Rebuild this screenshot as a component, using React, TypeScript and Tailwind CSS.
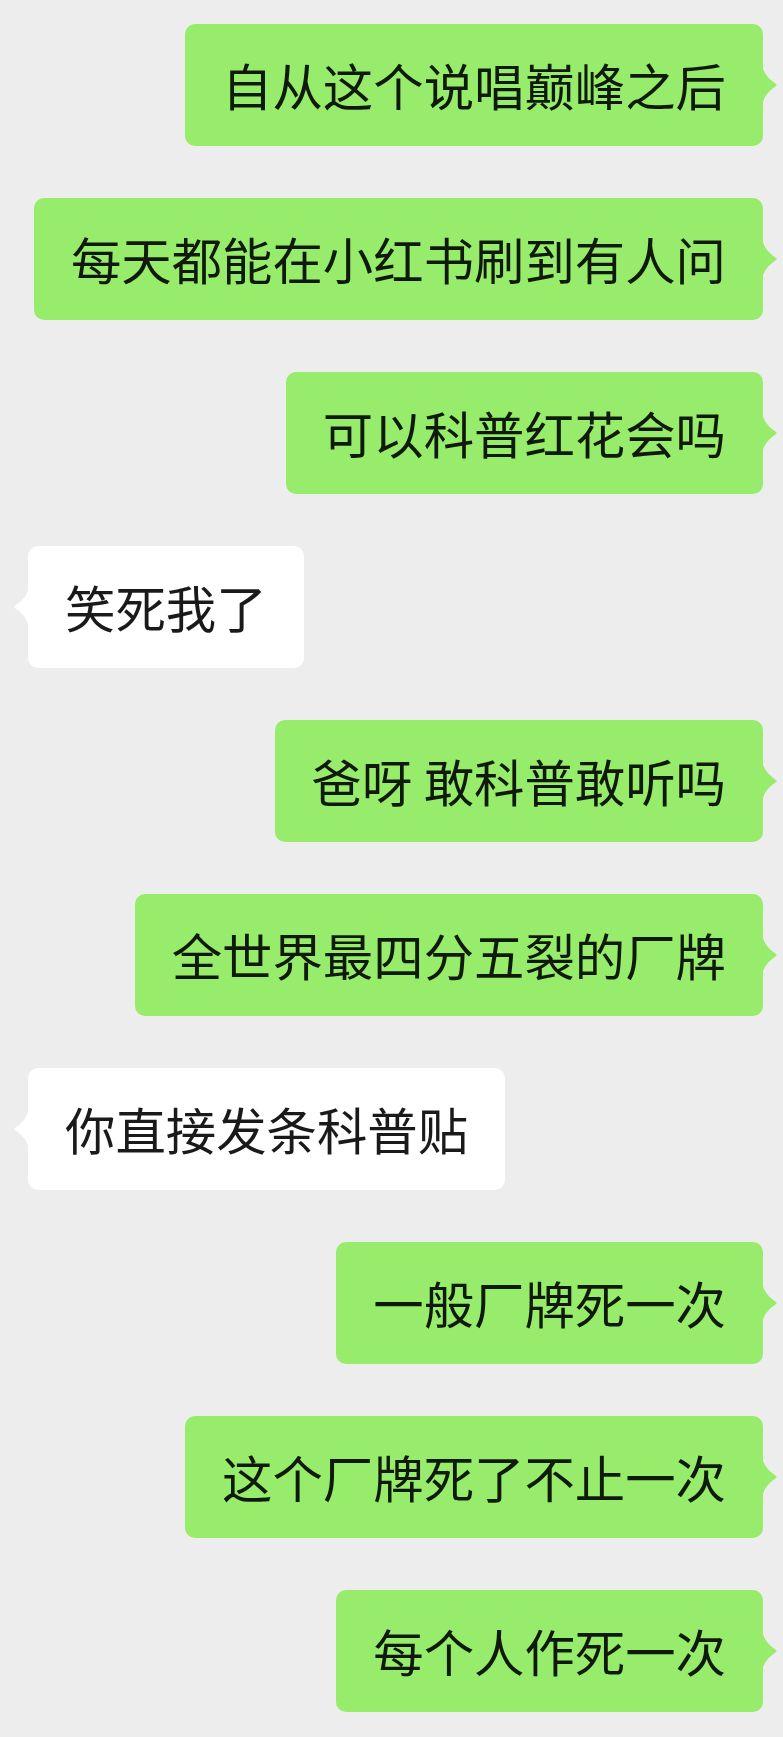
import React from "react";

type Msg = { text: string; mine: boolean };

const messages: Msg[] = [
  { text: "自从这个说唱巅峰之后", mine: true },
  { text: "每天都能在小红书刷到有人问", mine: true },
  { text: "可以科普红花会吗", mine: true },
  { text: "笑死我了", mine: false },
  { text: "爸呀 敢科普敢听吗", mine: true },
  { text: "全世界最四分五裂的厂牌", mine: true },
  { text: "你直接发条科普贴", mine: false },
  { text: "一般厂牌死一次", mine: true },
  { text: "这个厂牌死了不止一次", mine: true },
  { text: "每个人作死一次", mine: true },
];

function Bubble({ text, mine }: Msg) {
  return (
    <div className={mine ? "flex justify-end pr-[20px]" : "flex justify-start pl-[28px]"}>
      <div
        className={
          "relative h-[122px] flex items-center px-[37px] rounded-[10px] text-[50.4px] leading-[50px] whitespace-pre " +
          (mine ? "bg-[#97ec6b] text-[#0f1a0a]" : "bg-white text-[#1a1a1a]")
        }
      >
        {text}
        {/* tail */}
        {mine ? (
          <svg
            className="absolute right-[-15px] top-[41px]"
            width="16"
            height="40"
            viewBox="0 0 16 40"
          >
            <path
              d="M0 0 C2 9 7 14 14 19 Q15.5 20 14 21 C7 26 2 31 0 40 Z"
              fill="#97ec6b"
            />
          </svg>
        ) : (
          <svg
            className="absolute left-[-15px] top-[41px]"
            width="16"
            height="40"
            viewBox="0 0 16 40"
          >
            <path
              d="M16 0 C14 9 9 14 2 19 Q0.5 20 2 21 C9 26 14 31 16 40 Z"
              fill="#ffffff"
            />
          </svg>
        )}
      </div>
    </div>
  );
}

export default function App() {
  return (
    <main
      className="min-h-[1737px] w-full bg-[#ededed] pt-[24px] pb-[26px] flex flex-col gap-[52px]"
      style={{ fontFamily: '"Noto Sans CJK SC", "Noto Sans", sans-serif' }}
    >
      {messages.map((m, i) => (
        <Bubble key={i} text={m.text} mine={m.mine} />
      ))}
    </main>
  );
}
